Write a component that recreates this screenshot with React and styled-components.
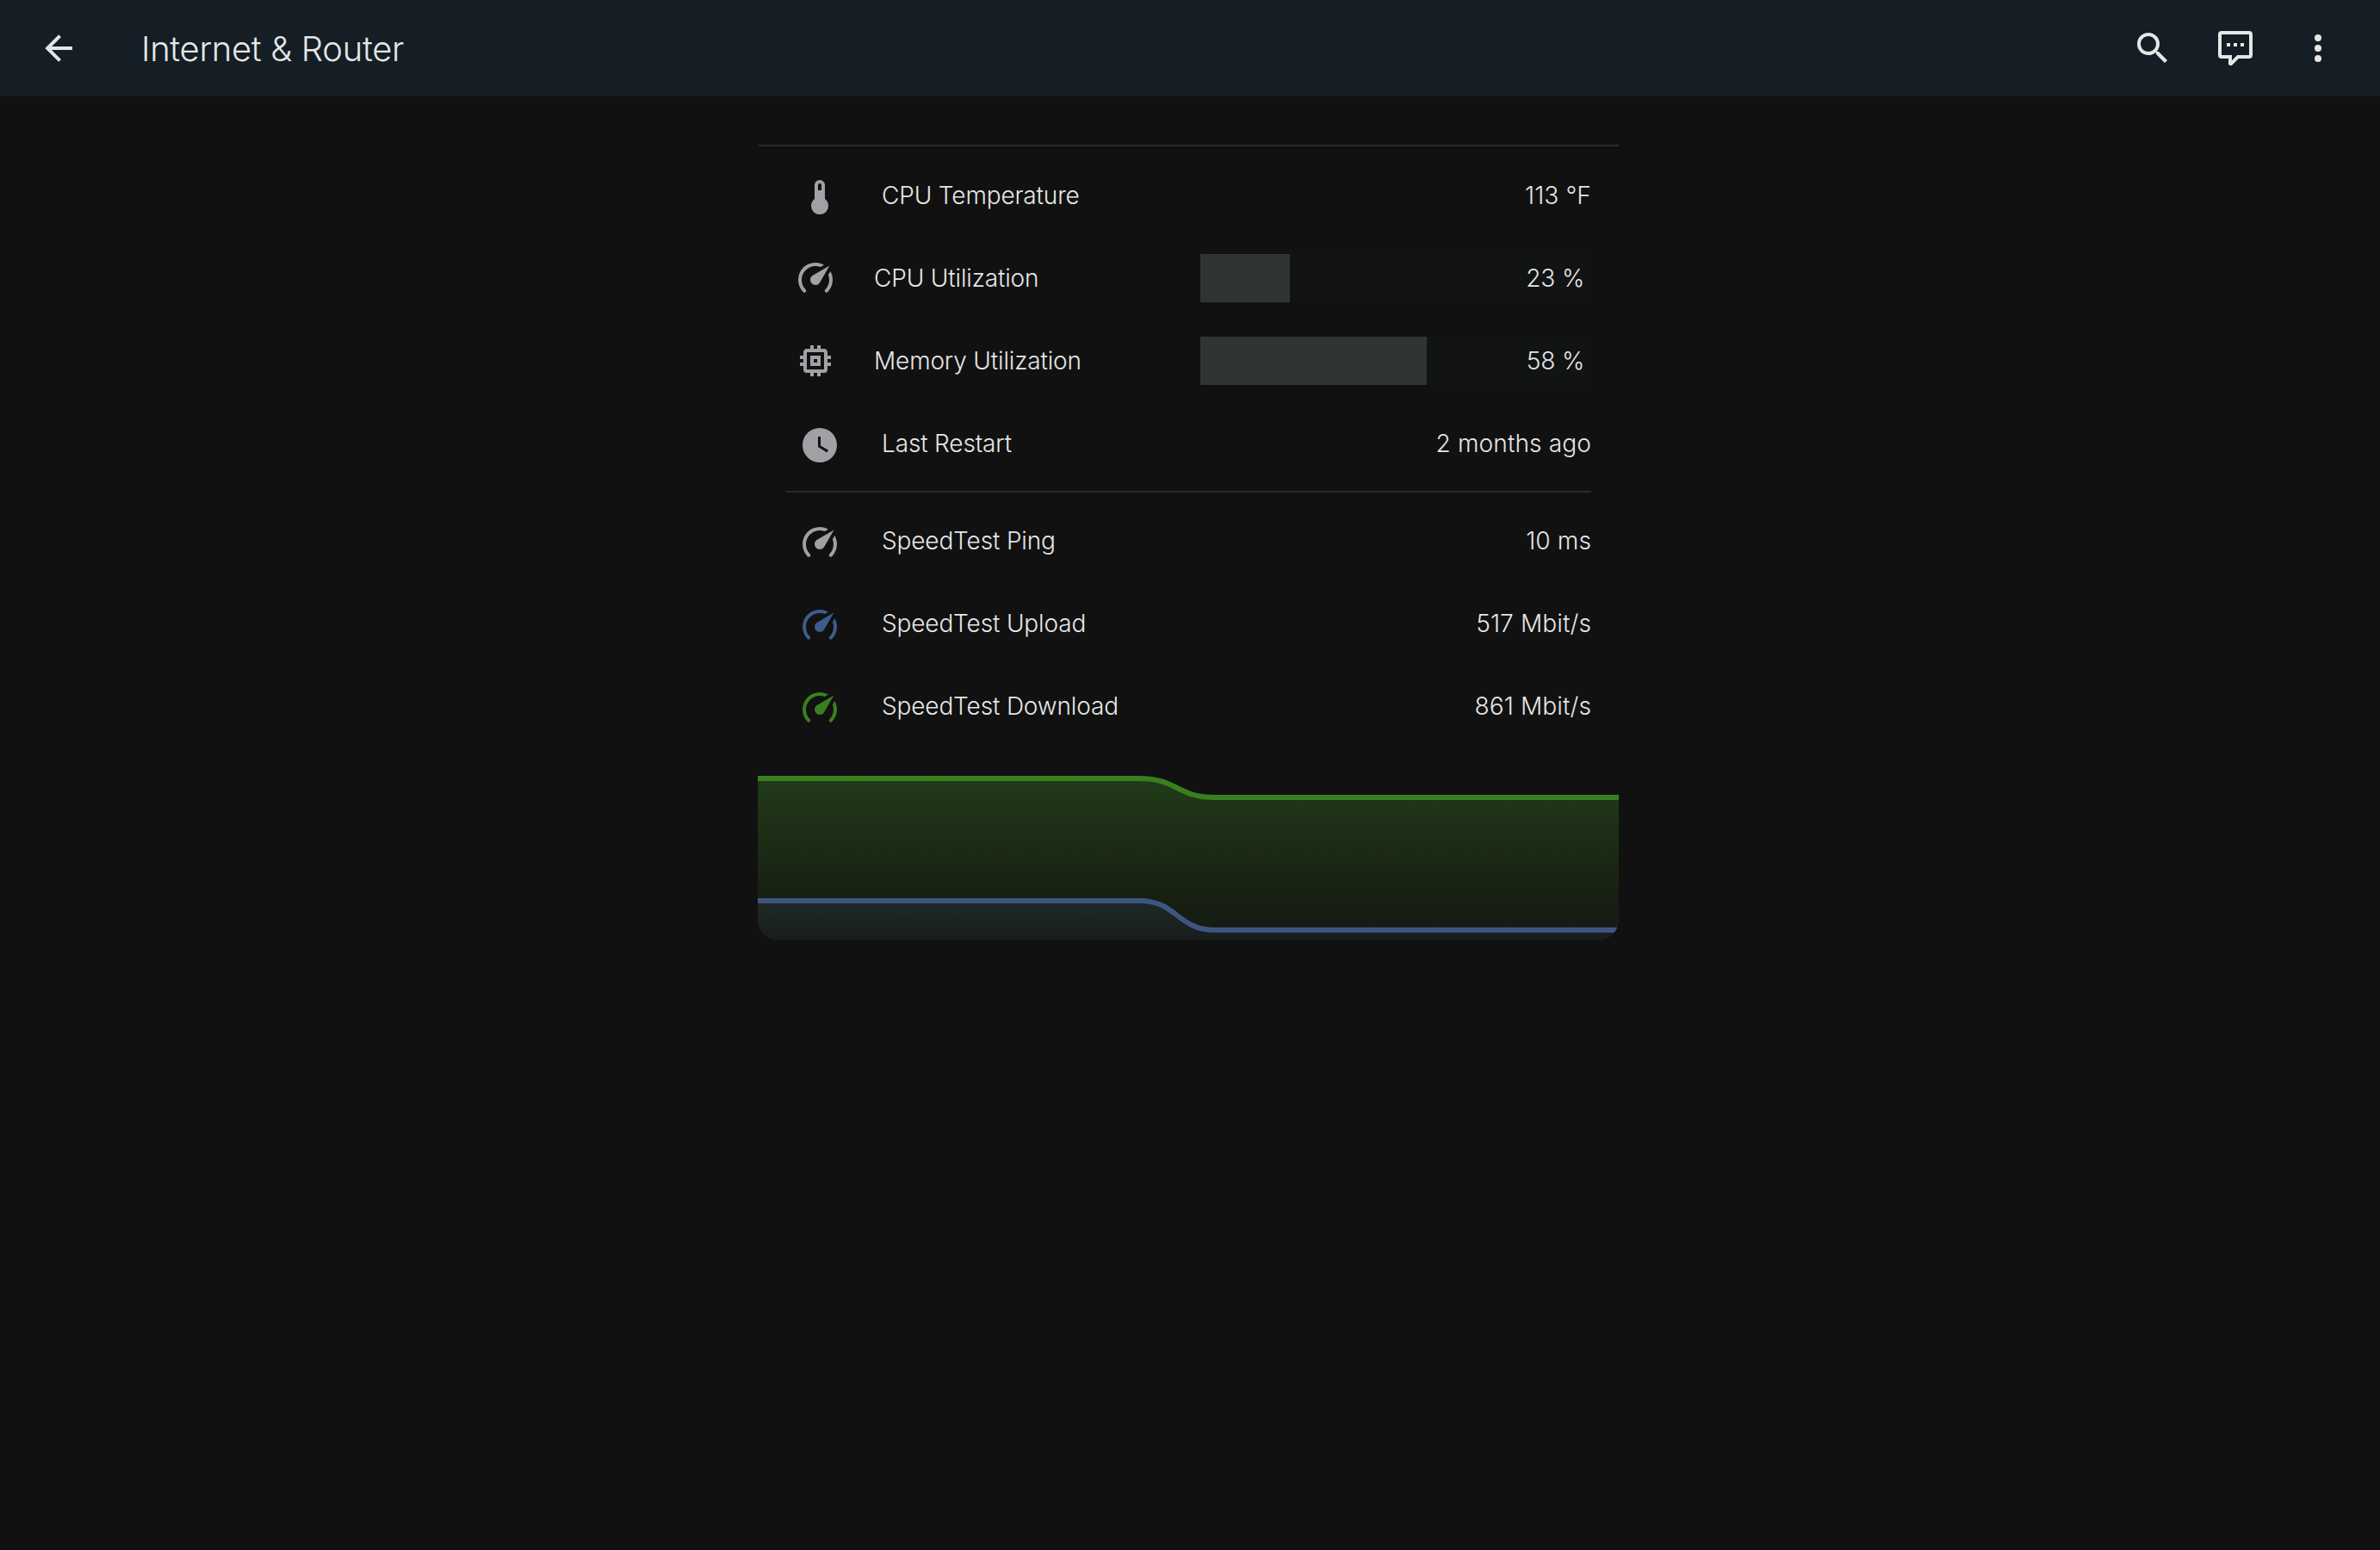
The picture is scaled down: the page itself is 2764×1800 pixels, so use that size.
import React from 'react';
import styled, { createGlobalStyle } from 'styled-components';

const Global = createGlobalStyle`
  html, body {
    margin: 0;
    padding: 0;
    background: #111111;
  }
  body {
    min-height: 1800px;
    font-family: Inter, "Liberation Sans", sans-serif;
    color: #e6e6e6;
  }
`;

const Toolbar = styled.header`
  display: flex;
  align-items: center;
  height: 112px;
  padding: 0 24px 0 20px;
  background: #141e24;
`;

const ToolButton = styled.div`
  display: flex;
  align-items: center;
  justify-content: center;
  width: 96px;
  height: 96px;
  color: #e6e6e6;
`;

const Title = styled.h1`
  flex: 1;
  margin: 0 0 0 48px;
  font-size: 40px;
  font-weight: 300;
  letter-spacing: -0.35px;
  color: #e6e6e6;
`;

const Panel = styled.main`
  width: 1000px;
  margin-left: 880px;
  padding-top: 56px;
`;

const Card = styled.section`
  border-top: 2px solid #2a2a2a;
  padding-top: 9px;
`;

const Row = styled.div`
  display: flex;
  align-items: center;
  height: 96px;
  padding-right: 32px;
  font-size: 28px;
  font-weight: 300;
  letter-spacing: -0.15px;
`;

const IconSlot = styled.div`
  display: flex;
  align-items: center;
  justify-content: center;
  flex: none;
  width: ${p => (p.$bar ? 70 : 80)}px;
  margin: ${p => (p.$bar ? 0 : 3)}px ${p => (p.$bar ? 30 : 32)}px 0 32px;
  color: ${p => p.$color || '#9fa1a4'};
`;

const Label = styled.span`
  flex: 1;
`;

const Value = styled.span`
  white-space: nowrap;
  letter-spacing: 0.15px;
`;

const BarLabel = styled.span`
  flex: none;
  width: 379px;
  margin-left: 3px;
`;

const Track = styled.div`
  position: relative;
  display: flex;
  align-items: center;
  justify-content: flex-end;
  width: 454px;
  height: 56px;
  padding-right: 8px;
  box-sizing: border-box;
  background: #121313;
`;

const Fill = styled.div`
  position: absolute;
  left: 0;
  top: 0;
  bottom: 0;
  background: #303435;
`;

const BarValue = styled.span`
  position: relative;
  white-space: nowrap;
`;

const Divider = styled.hr`
  height: 2px;
  margin: 7px 32px 8px 33px;
  border: 0;
  background: #2a2a2a;
`;

const Chart = styled.div`
  height: 191px;
  margin-top: 33px;
  border-radius: 0 0 24px 24px;
  overflow: hidden;

  svg {
    display: block;
  }
`;

const Mdi = ({ d, size = 48 }) => (
  <svg width={size} height={size} viewBox="0 0 24 24" fill="currentColor">
    <path d={d} />
  </svg>
);

const arrowLeft = 'M20,11V13H8L13.5,18.5L12.08,19.92L4.16,12L12.08,4.08L13.5,5.5L8,11H20Z';
const magnify = 'M9.5,3A6.5,6.5 0 0,1 16,9.5C16,11.11 15.41,12.59 14.44,13.73L14.71,14H15.5L20.5,19L19,20.5L14,15.5V14.71L13.73,14.44C12.59,15.41 11.11,16 9.5,16A6.5,6.5 0 0,1 3,9.5A6.5,6.5 0 0,1 9.5,3M9.5,5C7,5 5,7 5,9.5C5,12 7,14 9.5,14C12,14 14,12 14,9.5C14,7 12,5 9.5,5Z';
const message = 'M4,2H20A2,2 0 0,1 22,4V16A2,2 0 0,1 20,18H13.9L10.2,21.71C10,21.9 9.75,22 9.5,22H9A1,1 0 0,1 8,21V18H4A2,2 0 0,1 2,16V4A2,2 0 0,1 4,2M4,4V16H10V19.08L13.08,16H20V4H4M7,9H9V11H7V9M11,9H13V11H11V9M15,9H17V11H15V9Z';
const dots = 'M12,16A2,2 0 0,1 14,18A2,2 0 0,1 12,20A2,2 0 0,1 10,18A2,2 0 0,1 12,16M12,10A2,2 0 0,1 14,12A2,2 0 0,1 12,14A2,2 0 0,1 10,12A2,2 0 0,1 12,10M12,4A2,2 0 0,1 14,6A2,2 0 0,1 12,8A2,2 0 0,1 10,6A2,2 0 0,1 12,4Z';
const thermometer = 'M15 13V5A3 3 0 0 0 9 5V13A5 5 0 1 0 15 13M12 4A1 1 0 0 1 13 5V8H11V5A1 1 0 0 1 12 4Z';
const speedometer = 'M12,16A3,3 0 0,1 9,13C9,11.88 9.61,10.9 10.5,10.39L20.21,4.77L14.68,14.35C14.18,15.33 13.17,16 12,16M12,3C13.81,3 15.5,3.5 16.97,4.32L14.87,5.53C14,5.19 13,5 12,5A8,8 0 0,0 4,13C4,15.21 4.89,17.21 6.34,18.65H6.35C6.74,19.04 6.74,19.67 6.35,20.06C5.96,20.45 5.32,20.45 4.93,20.07V20.07C3.12,18.26 2,15.76 2,13A10,10 0 0,1 12,3M22,13C22,15.76 20.88,18.26 19.07,20.07V20.07C18.68,20.45 18.05,20.45 17.66,20.06C17.27,19.67 17.27,19.04 17.66,18.65V18.65C19.11,17.2 20,15.21 20,13C20,12 19.81,11 19.46,10.1L20.67,8C21.5,9.5 22,11.18 22,13Z';
const memory = 'M17,17H7V7H17M21,11V9H19V7C19,5.89 18.1,5 17,5H15V3H13V5H11V3H9V5H7C5.89,5 5,5.89 5,7V9H3V11H5V13H3V15H5V17A2,2 0 0,0 7,19H9V21H11V19H13V21H15V19H17A2,2 0 0,0 19,17V15H21V13H19V11M13,13H11V11H13M15,9H9V15H15V9Z';
const clock = 'M12,2A10,10 0 0,0 2,12A10,10 0 0,0 12,22A10,10 0 0,0 22,12A10,10 0 0,0 12,2M16.2,16.2L11,13V7H12.5V12.2L17,14.9L16.2,16.2Z';

const states = [
  { icon: thermometer, label: 'CPU Temperature', value: '113 °F' },
  { icon: speedometer, label: 'CPU Utilization', percent: 23, bar: true },
  { icon: memory, label: 'Memory Utilization', percent: 58, bar: true },
  { icon: clock, label: 'Last Restart', value: '2 months ago' },
];

const speedtests = [
  { icon: speedometer, label: 'SpeedTest Ping', value: '10 ms' },
  { icon: speedometer, label: 'SpeedTest Upload', value: '517 Mbit/s', color: '#3f5b8b' },
  { icon: speedometer, label: 'SpeedTest Download', value: '861 Mbit/s', color: '#38801f' },
];

function StateRow({ icon, label, value, percent, bar, color }) {
  if (bar) {
    return (
      <Row>
        <IconSlot $bar><Mdi d={icon} /></IconSlot>
        <BarLabel>{label}</BarLabel>
        <Track>
          <Fill style={{ width: `${percent}%` }} />
          <BarValue>{percent} %</BarValue>
        </Track>
      </Row>
    );
  }
  return (
    <Row>
      <IconSlot $color={color}><Mdi d={icon} /></IconSlot>
      <Label>{label}</Label>
      <Value>{value}</Value>
    </Row>
  );
}

function NetworkChart() {
  const green = 'M0,3 H443 C487,3 487,25 531,25 H1000';
  const blue = 'M0,145 H443 C487,145 487,179 531,179 H1000';
  return (
    <Chart>
      <svg width="1000" height="191" viewBox="0 0 1000 191">
        <defs>
          <linearGradient id="greenFill" x1="0" y1="0" x2="0" y2="1">
            <stop offset="0" stopColor="#213a1a" />
            <stop offset="0.75" stopColor="#171f12" />
            <stop offset="1" stopColor="#151a14" />
          </linearGradient>
          <linearGradient id="blueFill" x1="0" y1="0" x2="0" y2="1">
            <stop offset="0" stopColor="#1f2926" />
            <stop offset="1" stopColor="#171d1c" />
          </linearGradient>
        </defs>
        <path d={`${green} V191 H0 Z`} fill="url(#greenFill)" />
        <path d={`${blue} V191 H0 Z`} fill="url(#blueFill)" />
        <path d={green} fill="none" stroke="#38801f" strokeWidth="6" />
        <path d={blue} fill="none" stroke="#3f5581" strokeWidth="6" />
      </svg>
    </Chart>
  );
}

export default function App() {
  return (
    <>
      <Global />
      <Toolbar>
        <ToolButton><Mdi d={arrowLeft} /></ToolButton>
        <Title>Internet &amp; Router</Title>
        <ToolButton><Mdi d={magnify} /></ToolButton>
        <ToolButton><Mdi d={message} /></ToolButton>
        <ToolButton><Mdi d={dots} /></ToolButton>
      </Toolbar>
      <Panel>
        <Card>
          {states.map(s => <StateRow key={s.label} {...s} />)}
          <Divider />
          {speedtests.map(s => <StateRow key={s.label} {...s} />)}
        </Card>
        <NetworkChart />
      </Panel>
    </>
  );
}
